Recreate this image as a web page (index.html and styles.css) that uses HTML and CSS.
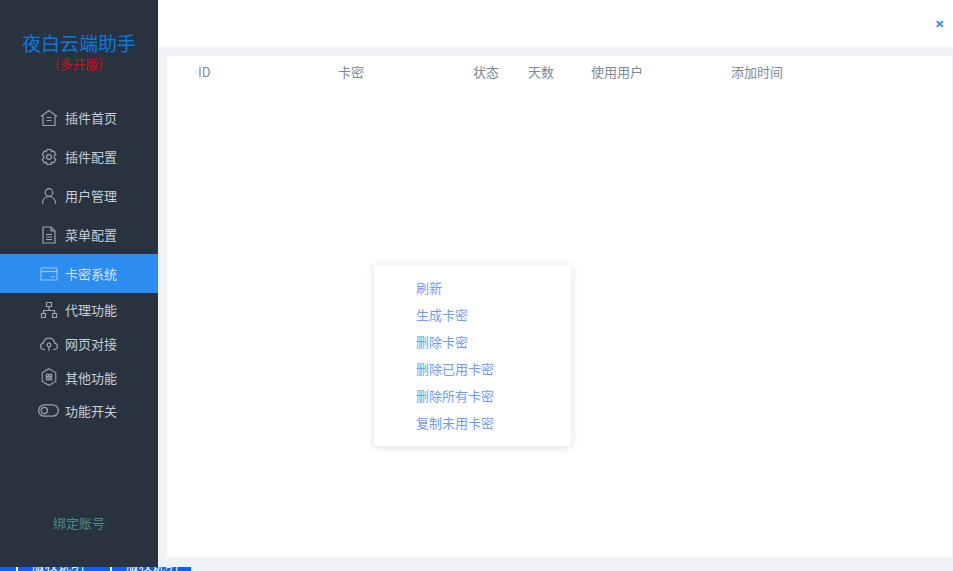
FILE: index.html
```html
<!DOCTYPE html>
<html lang="zh-CN">
<head>
    <meta charset="UTF-8">
    <title>卡密系统</title>
    <link rel="stylesheet" href="styles.css">
</head>
<body>
    <div class="app">
        <div class="sidebar">
            <div class="logo">
                <div class="logo-title">夜白云端助手</div>
                <div class="logo-sub">(多开版)</div>
            </div>
            <ul class="nav-links">
                <li class="nav-tall"><a href="#">
                    <svg viewBox="0 0 18 18"><path d="M1 7.5 9 1.5l8 6"/><path d="M3 6.5V16.5H15V6.5"/><path d="M6.5 8.5h5M6.5 11.5h5"/></svg>
                    <span>插件首页</span>
                </a></li>
                <li class="nav-tall"><a href="#">
                    <svg viewBox="0 0 18 18"><path d="M7 1.5h4l.6 2.2 2.2-.6 2 3.4L14.2 8v2l1.6 1.5-2 3.4-2.2-.6-.6 2.2H7l-.6-2.2-2.2.6-2-3.4L3.8 10V8L2.200 6.500l2-3.400 2.200.6z"/><circle cx="9" cy="9" r="2.400"/></svg>
                    <span>插件配置</span>
                </a></li>
                <li class="nav-tall"><a href="#">
                    <svg viewBox="0 0 18 18"><circle cx="9" cy="5.500" r="3.800"/><path d="M2.500 17c0-4.500 2.500-7.500 6.500-7.500s6.500 3 6.500 7.500"/></svg>
                    <span>用户管理</span>
                </a></li>
                <li class="nav-tall"><a href="#">
                    <svg viewBox="0 0 18 18"><path d="M3 1h8l4 4v12H3z"/><path d="M11 1v4h4"/><path d="M6 8.500h6M6 11h6M6 13.500h6"/></svg>
                    <span>菜单配置</span>
                </a></li>
                <li class="nav-active"><a href="#">
                    <svg viewBox="0 0 18 18"><path d="M1 3h16v12H1z"/><path d="M1 6.500h16"/><path d="M11 12h3.500"/></svg>
                    <span>卡密系统</span>
                </a></li>
                <li class="nav-short"><a href="#">
                    <svg viewBox="0 0 18 18"><path d="M6.500 1.500h5v4h-5z"/><path d="M9 5.500v4M3.500 12.500v-3h11v3"/><path d="M1.500 12.500h4v4h-4zM12.500 12.500h4v4h-4z"/></svg>
                    <span>代理功能</span>
                </a></li>
                <li class="nav-short"><a href="#">
                    <svg viewBox="0 0 18 18"><path d="M5 14.500H3.800C2 14.500.6 13.100.6 11.300c0-1.600 1.100-2.900 2.700-3.200C3.800 5.300 6.100 3.200 9 3.200s5.200 2.100 5.700 4.900c1.600.3 2.700 1.600 2.700 3.200 0 1.800-1.400 3.200-3.200 3.200H13"/><circle cx="9" cy="10" r="1.800"/><path d="M9 11.800V16"/></svg>
                    <span>网页对接</span>
                </a></li>
                <li class="nav-short"><a href="#">
                    <svg viewBox="0 0 20 20"><path d="M10 .8 17.500 5v10L10 19.200 2.500 15V5z"/><path d="M7 7h2.200v2.500H7zM10.800 7H13v2.500h-2.200zM7 10.800h2.200v2.500H7zM10.800 10.800H13v2.500h-2.200z"/></svg>
                    <span>其他功能</span>
                </a></li>
                <li class="nav-short"><a href="#">
                    <svg class="icon-wide" viewBox="0 0 20 12"><rect x=".6" y=".6" width="18.800" height="10.800" rx="5.400"/><circle cx="6" cy="6" r="3"/></svg>
                    <span>功能开关</span>
                </a></li>
            </ul>
            <div class="bind-account">绑定账号</div>
        </div>
        <div class="container-section">
            <div class="header">
                <span class="close-button">✕</span>
            </div>
            <div class="content-wrap">
                <div class="large-card">
                    <div class="table-head">
                        <div class="col-id">ID</div>
                        <div class="col-card">卡密</div>
                        <div class="col-status">状态</div>
                        <div class="col-days">天数</div>
                        <div class="col-user">使用用户</div>
                        <div class="col-time">添加时间</div>
                    </div>
                    <ul class="context-menu">
                        <li>刷新</li>
                        <li>生成卡密</li>
                        <li>删除卡密</li>
                        <li>删除已用卡密</li>
                        <li>删除所有卡密</li>
                        <li>复制未用卡密</li>
                    </ul>
                </div>
            </div>
        </div>
    </div>
    <div class="taskbar">
        <span class="task-block task-a"></span>
        <span class="task-text">版权说明</span>
        <span class="task-block task-b"></span>
        <span class="task-text">版权说明</span>
    </div>
</body>
</html>
```

FILE: styles.css
```css
html, body {
    height: 100%;
}
body {
    font-family: "Noto Sans CJK SC", "Liberation Sans", sans-serif;
    margin: 0;
    padding: 0;
    background-color: #f0f2f5;
    overflow: hidden;
}
.app {
    display: flex;
    height: 567px;
}
.sidebar {
    width: 158px;
    flex-shrink: 0;
    background-color: #28333f;
    display: flex;
    flex-direction: column;
}
.logo {
    height: 98px;
    padding-top: 31px;
    box-sizing: border-box;
    text-align: center;
}
.logo-title {
    font-size: 19px;
    line-height: 24px;
    color: #0a7ae0;
}
.logo-sub {
    font-size: 13px;
    line-height: 16px;
    margin-top: 1px;
    color: #d00f14;
}
.nav-links {
    list-style: none;
    padding: 0;
    margin: 0;
}
.nav-links li a {
    display: flex;
    align-items: center;
    height: 100%;
    padding-left: 40px;
    text-decoration: none;
    color: #c3ced8;
    font-size: 13px;
}
.nav-links li svg {
    width: 18px;
    height: 18px;
    margin-right: 7px;
    fill: none;
    stroke: #9aa4ae;
    stroke-width: 1.2;
}
.nav-links li svg.icon-wide {
    width: 21px;
    height: 13px;
    margin-left: -2px;
    margin-right: 6px;
}
.nav-tall {
    height: 39px;
}
.nav-short {
    height: 33.700px;
}
.nav-active {
    height: 39px;
    margin-bottom: 0;
    background-color: #2d8cf0;
}
.nav-links .nav-active a {
    color: #d5e6fa;
}
.nav-links .nav-active svg {
    stroke: #9cc6f3;
}
.bind-account {
    margin-top: auto;
    margin-bottom: 35px;
    text-align: center;
    font-size: 13px;
    line-height: 18px;
    color: #4f8a8b;
}
.container-section {
    flex: 1;
    display: flex;
    flex-direction: column;
    min-width: 0;
}
.header {
    height: 47px;
    background-color: #ffffff;
    display: flex;
    justify-content: flex-end;
    align-items: center;
    padding-right: 9px;
    flex-shrink: 0;
}
.close-button {
    color: #1e8cf5;
    font-size: 11px;
    font-weight: 700;
    line-height: 47px;
}
.content-wrap {
    flex: 1;
    padding: 9px 1px 10px 9px;
    min-height: 0;
}
.large-card {
    background-color: #ffffff;
    height: 100%;
    position: relative;
}
.table-head {
    display: flex;
    font-size: 13px;
    line-height: 18px;
    color: #7d8894;
    padding-top: 7px;
    padding-left: 31px;
}
.col-id {
    width: 140px;
}
.col-card {
    width: 135px;
}
.col-status {
    width: 55px;
}
.col-days {
    width: 63px;
}
.col-user {
    width: 140px;
}
.context-menu {
    position: absolute;
    left: 207px;
    top: 209px;
    width: 197px;
    height: 181px;
    box-sizing: border-box;
    margin: 0;
    padding: 9px 0 0 42px;
    list-style: none;
    background-color: #ffffff;
    border-radius: 2px;
    box-shadow: 0 1px 8px rgba(0, 0, 0, 0.14);
    font-size: 13px;
    line-height: 27px;
    color: #6f9bf0;
}
.taskbar {
    display: flex;
    width: 191px;
    height: 4px;
    overflow: hidden;
    background-color: #0f5ff5;
}
.task-block {
    height: 4px;
    background-color: #ffffff;
}
.task-a {
    width: 2px;
    margin-left: 16px;
}
.task-b {
    width: 2px;
    margin-left: 26px;
}
.task-text {
    font-size: 13px;
    line-height: 13px;
    margin-left: 14px;
    color: #ffffff;
    position: relative;
    top: -9px;
}
```
